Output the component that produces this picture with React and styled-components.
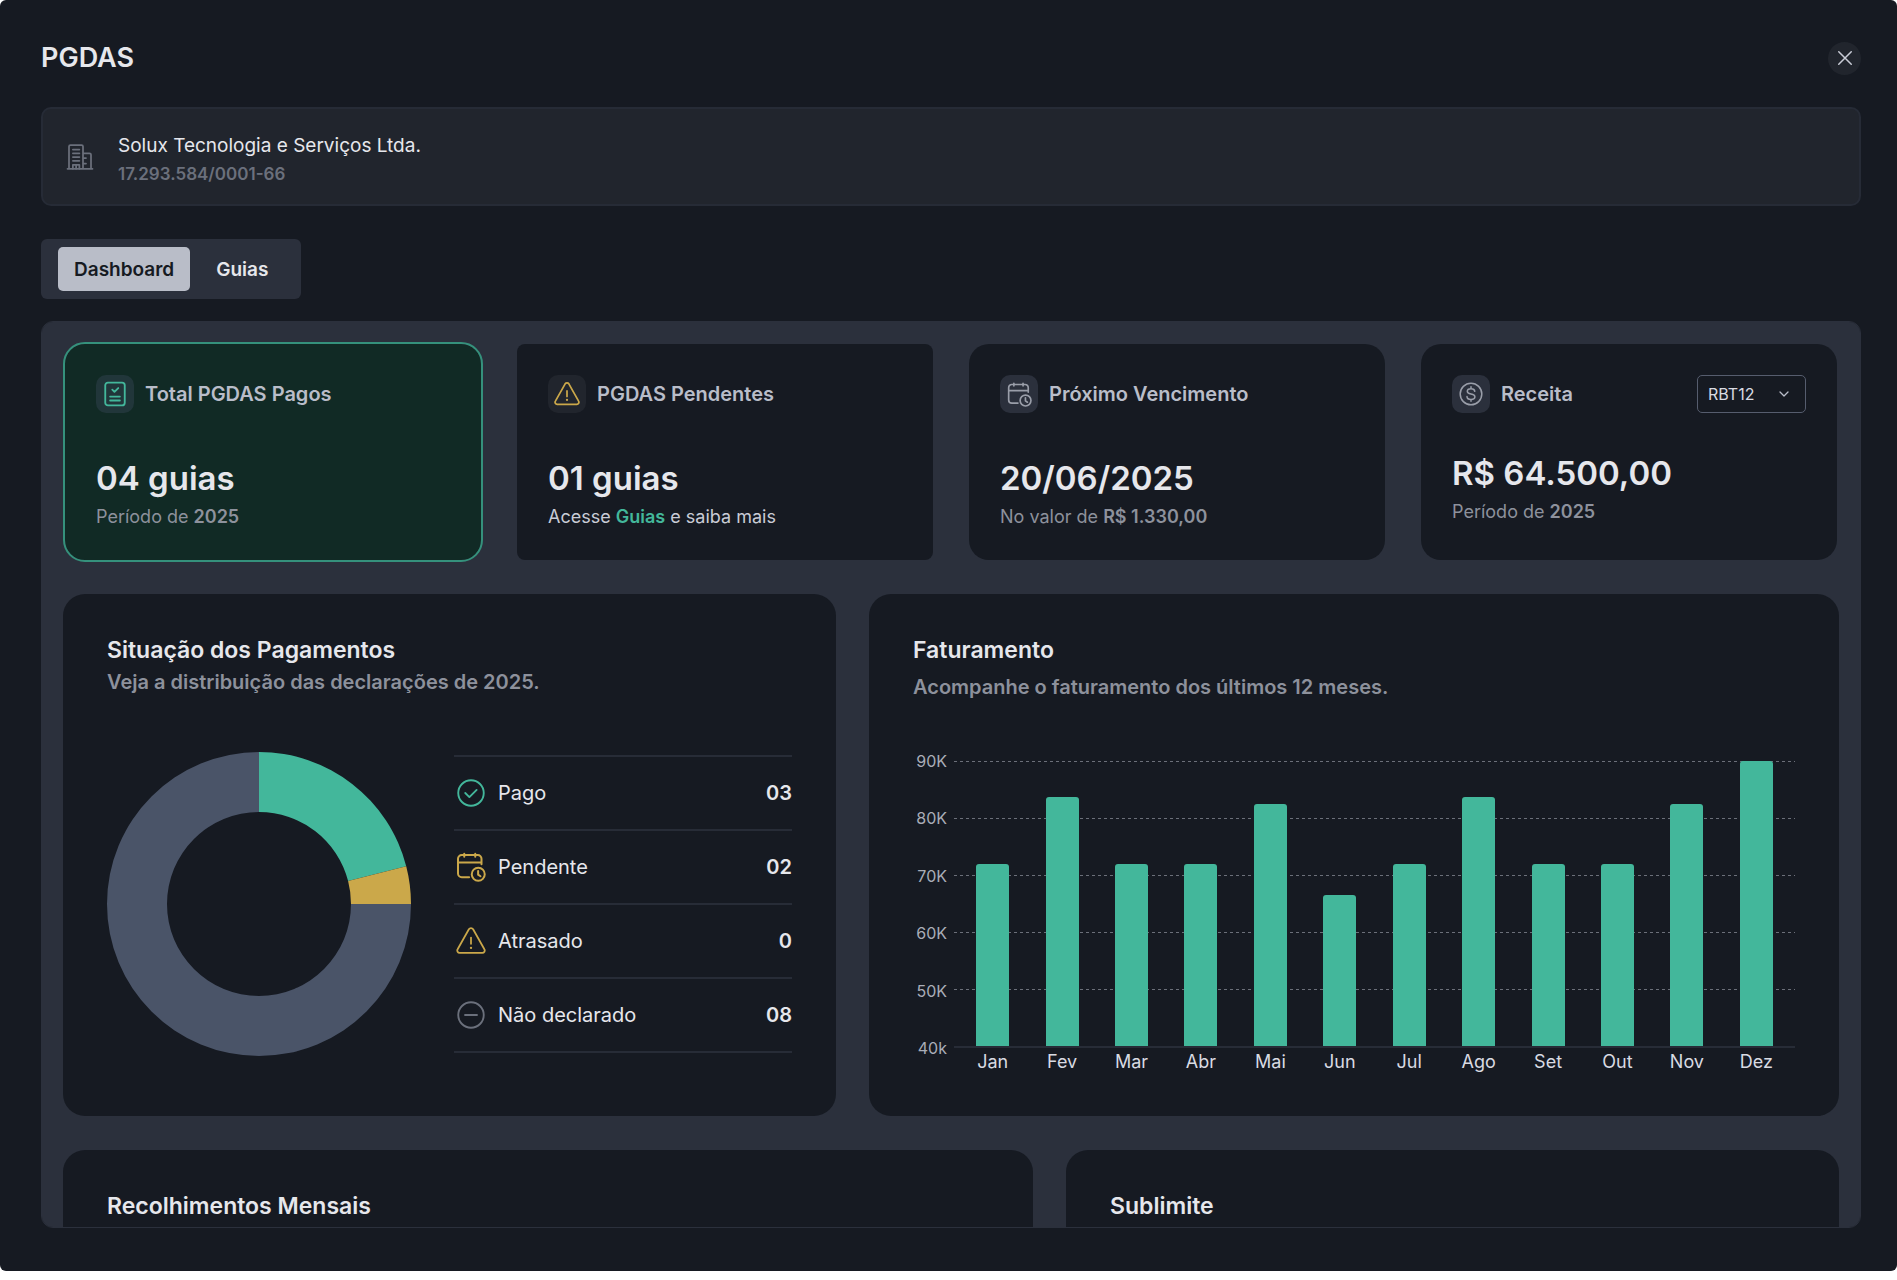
import React, { useState } from 'react'
import styled, { createGlobalStyle } from 'styled-components'

const GlobalStyle = createGlobalStyle`
  * {
    box-sizing: border-box;
  }
  body {
    margin: 0;
    background: #fff;
    color: #e6e7ec;
    font-family: Inter, 'Liberation Sans', sans-serif;
  }
  h1, h2, h3, p, ul {
    margin: 0;
    padding: 0;
  }
  button, select {
    font-family: inherit;
  }
`

const Modal = styled.main`
  display: flex;
  flex-direction: column;
  height: calc(100vh - 9px);
  padding: 41px 36px 43px 41px;
  border-radius: 6px;
  background: #161a22;
`
const Header = styled.header`
  display: flex;
  align-items: center;
  justify-content: space-between;
  height: 34px;
`
const Title = styled.h1`
  font-size: 27px;
  font-weight: 600;
  line-height: 34px;
`
const CloseButton = styled.button`
  display: grid;
  place-items: center;
  width: 33px;
  height: 33px;
  padding: 0;
  border: 0;
  border-radius: 50%;
  background: #21252d;
  color: #c9ccd6;
  cursor: pointer;
`
const Company = styled.section`
  display: flex;
  align-items: center;
  gap: 23px;
  flex-shrink: 0;
  height: 99px;
  margin-top: 32px;
  padding: 0 22px;
  border: 2px solid #262b36;
  border-radius: 10px;
  background: #21252d;
  color: #6b707c;
`
const CompanyInfo = styled.div`
  padding-top: 6px;
`
const CompanyName = styled.p`
  color: #e6e7ec;
  font-size: 19px;
  line-height: 28px;
`
const CompanyId = styled.p`
  font-size: 17px;
  font-weight: 600;
  line-height: 28px;
`
const Tabs = styled.div`
  display: flex;
  flex-shrink: 0;
  align-self: flex-start;
  gap: 10px;
  margin-top: 33px;
  padding: 8px 17px;
  border-radius: 6px;
  background: #2b303c;
`
const Tab = styled.button`
  height: 44px;
  padding: 0 16px;
  border: 0;
  border-radius: 5px;
  background: ${(p) => (p.$active ? '#b9bdc8' : 'transparent')};
  color: ${(p) => (p.$active ? '#161a22' : '#e6e7ec')};
  font-size: 19px;
  font-weight: 600;
  cursor: pointer;
`
const Panel = styled.section`
  display: flex;
  flex-direction: column;
  flex: 1;
  gap: 34px;
  min-height: 0;
  margin-top: 22px;
  padding: 22px 21px 0;
  overflow-y: auto;
  scrollbar-width: none;
  border: 1px solid #2b303c;
  border-radius: 12px;
  background: #2b303c;
`
const Summary = styled.div`
  display: grid;
  grid-template-columns: repeat(4, 1fr);
  flex-shrink: 0;
  gap: 36px;
  padding: 0 2px;
`
const Card = styled.article`
  padding: 31px 31px 30px;
  border-radius: ${(p) => p.$radius || 20}px;
  outline: ${(p) => (p.$highlight ? '2px solid #35917c' : 'none')};
  background: ${(p) => (p.$highlight ? '#112a25' : '#161a22')};
`
const CardHead = styled.div`
  display: flex;
  align-items: center;
  gap: 11px;
  height: 38px;
`
const IconBox = styled.span`
  display: grid;
  place-items: center;
  width: 38px;
  height: 38px;
  border-radius: 10px;
  background: ${(p) => p.$bg};
  color: ${(p) => p.$color};
`
const CardTitle = styled.h2`
  color: #b9bdc9;
  font-size: 20px;
  font-weight: 600;
  line-height: 28px;
`
const Value = styled.p`
  margin-top: ${(p) => (p.$compact ? 38 : 43)}px;
  font-size: 33px;
  font-weight: 600;
  line-height: 44px;
`
const Note = styled.p`
  margin-top: 4px;
  color: ${(p) => (p.$bright ? '#c9ccd6' : '#8d919c')};
  font-size: 18px;
  line-height: 26px;

  strong {
    font-weight: 600;
  }
  a {
    color: #43b79b;
    font-weight: 600;
    text-decoration: none;
  }
`
const SelectWrap = styled.label`
  position: relative;
  display: block;
  margin-left: auto;

  svg {
    position: absolute;
    top: 13px;
    right: 16px;
    color: #b9bdc9;
    pointer-events: none;
  }
`
const Select = styled.select`
  width: 109px;
  height: 38px;
  padding: 0 10px;
  appearance: none;
  border: 1px solid #565d6e;
  border-radius: 5px;
  background: #161a22;
  color: #d9dbe2;
  font-size: 16px;
`
const Row = styled.div`
  display: grid;
  grid-template-columns: ${(p) => p.$columns};
  flex-shrink: 0;
  gap: 33px;
`
const Block = styled.article`
  min-width: 0;
  padding: 40px 44px;
  border-radius: 22px;
  background: #161a22;
`
const BlockTitle = styled.h2`
  font-size: 23px;
  font-weight: 600;
  line-height: 32px;
`
const BlockText = styled.p`
  margin-top: ${(p) => p.$gap}px;
  color: #8d919c;
  font-size: 20px;
  font-weight: 600;
  line-height: 28px;
`
const Payments = styled.div`
  display: flex;
  align-items: center;
  gap: 43px;
  margin-top: 56px;
`
const Legend = styled.ul`
  flex: 1;
  border-top: 2px solid #272c37;
  list-style: none;
`
const LegendItem = styled.li`
  display: flex;
  align-items: center;
  gap: 12px;
  height: 74px;
  padding-left: 2px;
  border-bottom: 2px solid #272c37;
  font-size: 20px;

  svg {
    color: ${(p) => p.$color};
  }
  strong {
    margin-left: auto;
    font-weight: 600;
  }
`
const Chart = styled.div`
  display: grid;
  grid-template-columns: 34px 1fr;
  column-gap: 7px;
  margin-top: 60px;
`
const Scale = styled.div`
  display: flex;
  flex-direction: column;
  justify-content: space-between;
  margin: -10px 0;
  color: #a9adb8;
  font-size: 16px;
  line-height: 20px;
  text-align: right;
`
const Plot = styled.div`
  display: grid;
  height: 287px;

  > * {
    grid-area: 1 / 1;
  }
`
const Lines = styled.div`
  display: flex;
  flex-direction: column;
  border-bottom: 2px solid #272c37;
`
const Line = styled.div`
  flex: 1;
  background: repeating-linear-gradient(90deg, #6b6f79 0 3px, transparent 3px 6px) top / 100% 1px no-repeat;
`
const Bars = styled.div`
  display: flex;
  align-items: flex-end;
  padding: 0 4px 2px;
`
const BarSlot = styled.div`
  display: flex;
  flex: 1;
  align-items: flex-end;
  justify-content: center;
  height: 100%;
`
const Bar = styled.div`
  width: 33px;
  border-radius: 3px 3px 0 0;
  background: #43b79b;
`
const Months = styled.div`
  display: flex;
  grid-column: 2;
  padding: 0 4px;
  color: #d9dbe2;
  font-size: 18px;
  line-height: 28px;

  span {
    flex: 1;
    text-align: center;
  }
`

const Svg = ({ size = 24, width = 1.5, children }) => (
  <svg
    width={size}
    height={size}
    viewBox="0 0 24 24"
    fill="none"
    stroke="currentColor"
    strokeWidth={width}
    strokeLinecap="round"
    strokeLinejoin="round"
    aria-hidden="true"
  >
    {children}
  </svg>
)

const BuildingIcon = () => (
  <Svg size={30} width={1.4}>
    <path d="M2 21.4h20M3.2 21.4V3.6a1.2 1.2 0 0 1 1.2-1.2h8.8a1.2 1.2 0 0 1 1.2 1.2v17.8M14.4 9h5.2a1.2 1.2 0 0 1 1.2 1.2v11.2" />
    <path d="M6.3 6h5.2M6.3 9h5.2M6.3 12h5.2M6.3 15h5.2M6.3 21.4v-3.2h5.2v3.2M8.9 18.2v3.2M14.8 12.8h2M14.8 17.2h2" />
  </Svg>
)

const ChecklistIcon = () => (
  <Svg size={26} width={1.7}>
    <rect x="3" y="1.5" width="18" height="21" rx="2.5" />
    <path d="m9.5 8 2 2 3.5-3.5" />
    <path d="M7.5 14.4h9M7.5 18h9" />
  </Svg>
)

const WarningIcon = ({ size, width }) => (
  <Svg size={size} width={width}>
    <path d="M10.3 2.6 1.3 18.6A1.9 1.9 0 0 0 3 21.500h18a1.9 1.9 0 0 0 1.700-2.900l-9-16a2 2 0 0 0-3.400 0Z" />
    <path d="M12 9.2v5" />
    <path d="M12 17.4v.1" strokeWidth={width + 0.4} />
  </Svg>
)

const CalendarClockIcon = ({ size, width }) => (
  <Svg size={size} width={width}>
    <path d="M10.5 20.2H4.6a3 3 0 0 1-3-3V5.4a3 3 0 0 1 3-3h12.800a3 3 0 0 1 3 3v4.400M1.600 8.300h18.800M6.600 1.300v2.400M15.400 1.300v2.400" />
    <circle cx="17.8" cy="17.8" r="5.2" />
    <path d="M17.700 15.200v2.900l1.900 1.300" />
  </Svg>
)

const DollarIcon = () => (
  <Svg size={24} width={1.5}>
    <circle cx="12" cy="12" r="10.8" />
    <path d="M15.800 9.300c-.2-1.700-1.700-2.600-3.800-2.600s-3.700.9-3.700 2.600c0 1.900 1.700 2.300 3.700 2.700 2.200.4 3.900.9 3.900 2.700s-1.700 2.700-3.900 2.700-3.900-1-4-2.800M12 4.800v1.900M12 17.400v1.900" />
  </Svg>
)

const CheckIcon = () => (
  <Svg size={30} width={1.5}>
    <circle cx="12" cy="12" r="10.2" />
    <path d="m7.400 12 3.300 3.300 5.800-5.800" />
  </Svg>
)

const MinusIcon = () => (
  <Svg size={30} width={1.5}>
    <circle cx="12" cy="12" r="10.2" />
    <path d="M7.200 12h9.600" />
  </Svg>
)

const polar = (r, share) => {
  const angle = share * 2 * Math.PI
  return `${152 + r * Math.sin(angle)} ${152 - r * Math.cos(angle)}`
}

const slice = (from, to) => {
  const large = to - from > 0.5 ? 1 : 0
  return `M${polar(152, from)}A152 152 0 ${large} 1 ${polar(152, to)}L${polar(92, to)}A92 92 0 ${large} 0 ${polar(92, from)}Z`
}

const Donut = () => (
  <svg width="304" height="304" viewBox="0 0 304 304" role="img" aria-label="Situação dos Pagamentos">
    <path d={slice(0, 0.21)} fill="#43b79b" />
    <path d={slice(0.21, 0.25)} fill="#cba84a" />
    <path d={slice(0.25, 1)} fill="#4a5468" />
  </svg>
)

const legend = [
  { label: 'Pago', value: '03', color: '#43b79b', icon: <CheckIcon /> },
  { label: 'Pendente', value: '02', color: '#cba84a', icon: <CalendarClockIcon size={30} width={1.6} /> },
  { label: 'Atrasado', value: '0', color: '#cba84a', icon: <WarningIcon size={30} width={1.4} /> },
  { label: 'Não declarado', value: '08', color: '#6b707c', icon: <MinusIcon /> },
]

const revenue = [
  ['Jan', 72],
  ['Fev', 83.7],
  ['Mar', 72],
  ['Abr', 72],
  ['Mai', 82.5],
  ['Jun', 66.5],
  ['Jul', 72],
  ['Ago', 83.7],
  ['Set', 72],
  ['Out', 72],
  ['Nov', 82.5],
  ['Dez', 90],
]

const scale = ['90K', '80K', '70K', '60K', '50K', '40k']

const RevenueChart = () => (
  <Chart>
    <Scale>
      {scale.map((s) => (
        <span key={s}>{s}</span>
      ))}
    </Scale>
    <Plot>
      <Lines>
        {scale.slice(1).map((s) => (
          <Line key={s} />
        ))}
      </Lines>
      <Bars>
        {revenue.map(([month, value]) => (
          <BarSlot key={month}>
            <Bar style={{ height: `${(value - 40) * 2}%` }} />
          </BarSlot>
        ))}
      </Bars>
    </Plot>
    <Months>
      {revenue.map(([month]) => (
        <span key={month}>{month}</span>
      ))}
    </Months>
  </Chart>
)

const App = () => {
  const [tab, setTab] = useState('Dashboard')

  return (
    <>
      <GlobalStyle />
      <Modal>
        <Header>
          <Title>PGDAS</Title>
          <CloseButton type="button" aria-label="Fechar">
            <Svg size={20} width={1.8}>
              <path d="m4.500 4.500 15 15M19.500 4.500l-15 15" />
            </Svg>
          </CloseButton>
        </Header>

        <Company>
          <BuildingIcon />
          <CompanyInfo>
            <CompanyName>Solux Tecnologia e Serviços Ltda.</CompanyName>
            <CompanyId>17.293.584/0001-66</CompanyId>
          </CompanyInfo>
        </Company>

        <Tabs role="tablist">
          {['Dashboard', 'Guias'].map((name) => (
            <Tab
              key={name}
              type="button"
              role="tab"
              aria-selected={tab === name}
              $active={tab === name}
              onClick={() => setTab(name)}
            >
              {name}
            </Tab>
          ))}
        </Tabs>

        <Panel>
          <Summary>
            <Card $highlight>
              <CardHead>
                <IconBox $bg="#21363a" $color="#43b79b">
                  <ChecklistIcon />
                </IconBox>
                <CardTitle>Total PGDAS Pagos</CardTitle>
              </CardHead>
              <Value>04 guias</Value>
              <Note>
                Período de <strong>2025</strong>
              </Note>
            </Card>

            <Card $radius={8}>
              <CardHead>
                <IconBox $bg="#21252d" $color="#cba84a">
                  <WarningIcon size={26} width={1.6} />
                </IconBox>
                <CardTitle>PGDAS Pendentes</CardTitle>
              </CardHead>
              <Value>01 guias</Value>
              <Note $bright>
                Acesse <a href="#guias">Guias</a> e saiba mais
              </Note>
            </Card>

            <Card>
              <CardHead>
                <IconBox $bg="#2b303c" $color="#9a9ea9">
                  <CalendarClockIcon size={25} width={1.6} />
                </IconBox>
                <CardTitle>Próximo Vencimento</CardTitle>
              </CardHead>
              <Value>20/06/2025</Value>
              <Note>
                No valor de <strong>R$ 1.330,00</strong>
              </Note>
            </Card>

            <Card>
              <CardHead>
                <IconBox $bg="#2b303c" $color="#9a9ea9">
                  <DollarIcon />
                </IconBox>
                <CardTitle>Receita</CardTitle>
                <SelectWrap>
                  <Select aria-label="Período da receita" defaultValue="RBT12">
                    <option>RBT12</option>
                  </Select>
                  <Svg size={12} width={2.6}>
                    <path d="m4 8 8 8 8-8" />
                  </Svg>
                </SelectWrap>
              </CardHead>
              <Value $compact>R$ 64.500,00</Value>
              <Note>
                Período de <strong>2025</strong>
              </Note>
            </Card>
          </Summary>

          <Row $columns="773fr 970fr">
            <Block>
              <BlockTitle>Situação dos Pagamentos</BlockTitle>
              <BlockText $gap={2}>Veja a distribuição das declarações de 2025.</BlockText>
              <Payments>
                <Donut />
                <Legend>
                  {legend.map((item) => (
                    <LegendItem key={item.label} $color={item.color}>
                      {item.icon}
                      <span>{item.label}</span>
                      <strong>{item.value}</strong>
                    </LegendItem>
                  ))}
                </Legend>
              </Payments>
            </Block>

            <Block>
              <BlockTitle>Faturamento</BlockTitle>
              <BlockText $gap={7}>Acompanhe o faturamento dos últimos 12 meses.</BlockText>
              <RevenueChart />
            </Block>
          </Row>

          <Row $columns="970fr 773fr">
            <Block>
              <BlockTitle>Recolhimentos Mensais</BlockTitle>
            </Block>
            <Block>
              <BlockTitle>Sublimite</BlockTitle>
            </Block>
          </Row>
        </Panel>
      </Modal>
    </>
  )
}

export default App
